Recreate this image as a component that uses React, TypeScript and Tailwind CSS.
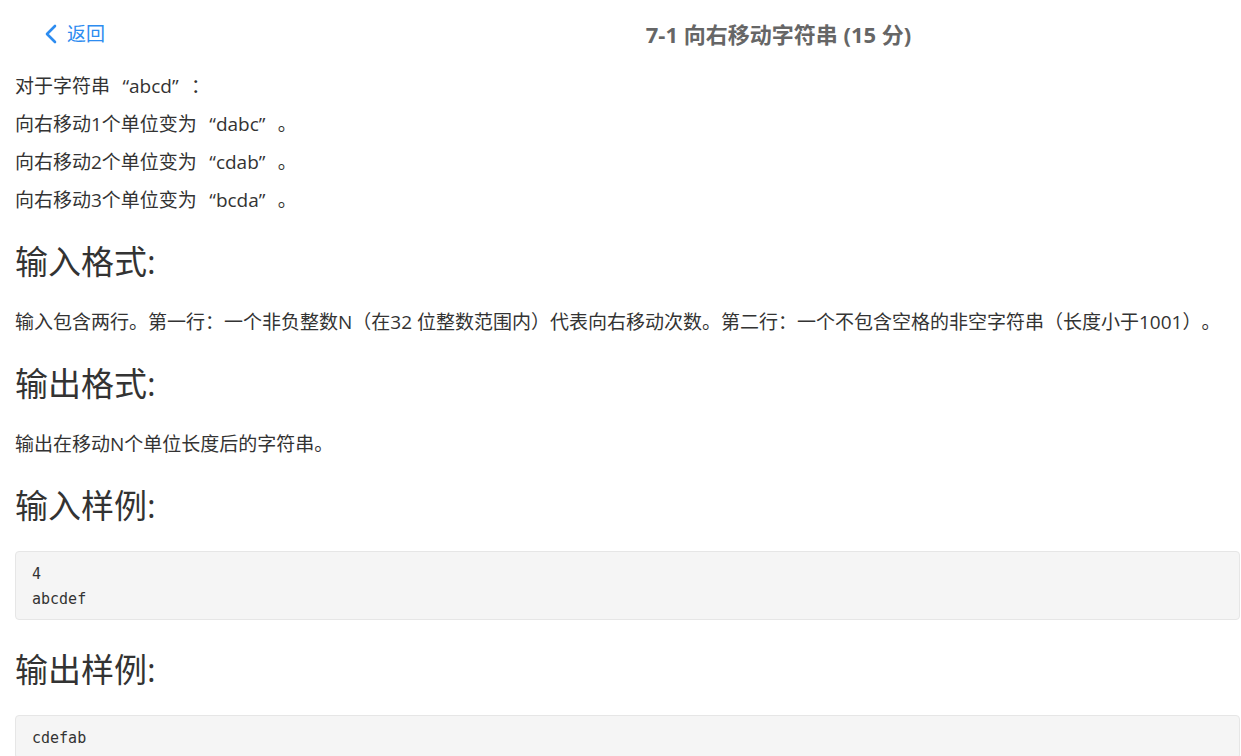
const sans = "font-['Open_Sans','Noto_Sans_CJK_SC',sans-serif]";

// full-width curly quotes, like the CJK system font draws them
function Q({ children }: { children: React.ReactNode }) {
    return (
        <>
            <span className="inline-block w-[1em] text-right">“</span>
            {children}
            <span className="inline-block w-[1em] text-left">”</span>
        </>
    );
}

function Heading({ children, beforeCode }: { children: React.ReactNode; beforeCode?: boolean }) {
    return (
        <h2
            className={
                beforeCode
                    ? 'text-[33px] leading-[36px] text-[#333] font-normal mt-[32px] mb-[27px]'
                    : 'text-[33px] leading-[36px] text-[#333] font-normal mt-[32px] mb-[30px]'
            }
        >
            {children}
        </h2>
    );
}

function CodeBlock({ lines }: { lines: string[] }) {
    return (
        <pre className="bg-[#f5f5f5] border border-[#e6e6e6] rounded-[4px] px-4 pt-[10px] pb-[7px] text-[15px] leading-[25px] text-[#333] font-['DejaVu_Sans_Mono','Liberation_Mono',monospace]">
            {lines.join('\n')}
        </pre>
    );
}

export default function App() {
    return (
        <div className={`${sans} bg-white min-h-screen text-[#333] [text-spacing-trim:space-all]`}>
            {/* Header */}
            <div className="flex items-center h-[68px]">
                <div className="w-[316px] pl-[44px]">
                    <button className="flex items-center gap-[10px] text-[#2d8cf0] text-[19px]">
                        <svg width="13" height="20" viewBox="0 0 13 20" fill="none">
                            <path d="M11 2 L3 10 L11 18" stroke="currentColor" strokeWidth="2.6" strokeLinecap="round" strokeLinejoin="round" />
                        </svg>
                        <span>返回</span>
                    </button>
                </div>
                <h1 className="flex-1 text-center text-[22px] font-bold text-[#666]">
                    7-1 向右移动字符串 (15 分)
                </h1>
            </div>

            {/* Body */}
            <div className="pl-[15px] pr-[1px] pt-[6px] text-[19px]">
                <p className="leading-[24px] mb-[14px]">对于字符串<Q>abcd</Q>：</p>
                <p className="leading-[24px] mb-[14px]">向右移动1个单位变为<Q>dabc</Q>。</p>
                <p className="leading-[24px] mb-[14px]">向右移动2个单位变为<Q>cdab</Q>。</p>
                <p className="leading-[24px]">向右移动3个单位变为<Q>bcda</Q>。</p>

                <Heading>输入格式:</Heading>
                <p className="leading-[24px]">
                    输入包含两行。第一行：一个非负整数N（在32 位整数范围内）代表向右移动次数。第二行：一个不包含空格的非空字符串（长度小于1001）。
                </p>

                <Heading>输出格式:</Heading>
                <p className="leading-[24px]">输出在移动N个单位长度后的字符串。</p>

                <Heading beforeCode>输入样例:</Heading>
                <CodeBlock lines={['4', 'abcdef']} />

                <Heading beforeCode>输出样例:</Heading>
                <CodeBlock lines={['cdefab']} />
            </div>
        </div>
    );
}
